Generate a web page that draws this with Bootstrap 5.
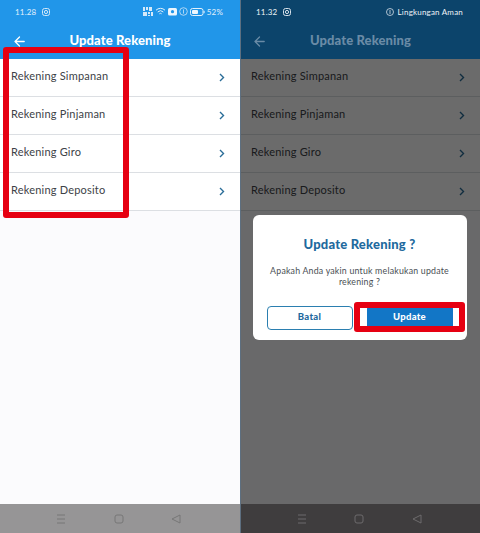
<!DOCTYPE html>
<html lang="id">
<head>
    <meta charset="UTF-8">
    <meta name="viewport" content="width=device-width, initial-scale=1.0">
    <title>Update Rekening</title>
    <link href="https://cdn.jsdelivr.net/npm/bootstrap@5.3.3/dist/css/bootstrap.min.css" rel="stylesheet">
    <style>
        html, body { height: 533px; overflow: hidden; }
        body { margin: 0; background: #5d6f80; font-family: "Lato", "Liberation Sans", sans-serif; }
        .screens { width: 480px; height: 533px; gap: 1px; }
        .phone { width: 240px; height: 533px; background: #fff; }
        .phone-right { width: 239px; }
        .top-blue { height: 59px; background: #2196e9; color: #fff; }
        .phone-right .top-blue { background: #1da2ff; }
        .status-line { height: 23px; padding: 0 17px 0 15px; font-size: 8px; letter-spacing: .2px; color: #e3f1fc; }
        .status-left { gap: 6px; }
        .status-icons { gap: 2px; }
        .title-line { height: 36px; padding-left: 14px; }
        .phone-right .title-line { padding-left: 13px; position: relative; z-index: 2; }
        .title-text { left: 0; right: 0; text-align: center; font-size: 13px; font-weight: 900; letter-spacing: .1px; color: #fff; }
        .phone-right .title-text { color: #6a8ba6; }
        .menu-row { height: 38px; padding: 0 15px 0 11px; border-bottom: 1px solid #dcdfe3; font-size: 11px; letter-spacing: .2px; color: #3d4247; }
        .phone-right .menu-row { padding: 0 15px 0 10px; }
        .row-label { margin-bottom: 3px; }
        .fill-area { background: #fbfbfd; }
        .bottom-nav { height: 29px; background: #969596; padding: 0 3px 0 0; gap: 47.5px; }
        .phone-right .bottom-nav { background: #3f3d3e; position: relative; z-index: 2; }
        .dim-layer { inset: 0; background: rgba(0, 0, 0, .58); padding-top: 21px; padding-right: 2px; }
        .status-over { top: 0; left: 0; right: 0; color: #eef3f7; z-index: 2; }
        .dialog-box { width: 214px; height: 125px; background: #fff; border-radius: 6px; padding: 21px 14px 0; }
        .dialog-title { font-size: 13px; font-weight: 900; letter-spacing: .2px; color: #1f6a9e; margin: 0 0 13px; line-height: 16px; }
        .dialog-msg { font-size: 8.8px; letter-spacing: .2px; line-height: 11px; color: #4a4f55; margin: 0 0 19px; }
        .btn-batal, .btn-update { height: 24px; width: 86px; padding: 0; font-size: 9.5px; font-weight: 900; letter-spacing: .3px; border-radius: 3px; }
        .btn-batal { background: #fff; color: #1f6a9e; border: 1px solid #2b7fb0; border-radius: 4px; }
        .btn-update { background: #1276c6; color: #fff; border: 0; }
        .dialog-actions { gap: 14px; }
        .red-mark { position: absolute; border: 6px solid #e60012; border-radius: 3px; z-index: 5; }
        .mark-list { left: 3px; top: 47px; width: 126px; height: 171px; }
        .mark-btn { left: 354px; top: 302px; width: 111px; height: 30px; }
    </style>
</head>
<body>
<div class="screens d-flex position-relative">

    <!-- kiri: daftar rekening -->
    <div class="phone d-flex flex-column">
        <div class="top-blue">
            <div class="status-line d-flex align-items-center justify-content-between">
                <div class="status-left d-flex align-items-center">
                    <span>11.28</span>
                    <svg width="8" height="8" viewBox="0 0 8 8" fill="none" stroke="#cfe6f8" stroke-width="1"><rect x=".5" y=".5" width="7" height="7" rx="2"/><circle cx="4" cy="4" r="1.6"/></svg>
                </div>
                <div class="status-icons d-flex align-items-center">
                    <svg width="10" height="9" viewBox="0 0 10 9" fill="#d5e9f9"><rect width="2" height="4"/><rect x="3" width="2" height="3"/><rect x="6" width="3" height="4"/><rect y="5" width="4" height="4"/><rect x="5" y="5" width="2" height="2"/><rect x="8" y="5" width="2" height="4"/><rect x="5" y="8" width="2" height="1"/></svg>
                    <svg width="11" height="9" viewBox="0 0 11 9" fill="none" stroke="#e3f1fc" stroke-width="1"><path d="M1 3.2a6.4 6.4 0 0 1 9 0M2.7 5a4 4 0 0 1 5.6 0M4.4 6.8a1.6 1.6 0 0 1 2.2 0"/></svg>
                    <svg width="9" height="8" viewBox="0 0 9 8" fill="#eef6fd"><rect width="9" height="7.5" rx="1.5"/><circle cx="4.5" cy="3.7" r="1.6" fill="#2196e9"/></svg>
                    <svg width="9" height="9" viewBox="0 0 9 9" fill="none" stroke="#cfe6f8" stroke-width=".8"><circle cx="4.5" cy="4.5" r="3.8"/><path d="M4.5 2.4v4.2"/></svg>
                    <svg width="15" height="8" viewBox="0 0 15 8"><rect x=".5" y=".5" width="12.5" height="7" rx="2" fill="none" stroke="#e3f1fc"/><rect x="2" y="2" width="6" height="4" rx="1" fill="#eef6fd"/><rect x="13.6" y="2.8" width="1" height="2.4" fill="#e3f1fc"/></svg>
                    <span>52%</span>
                </div>
            </div>
            <div class="title-line position-relative d-flex align-items-center">
                <div class="title-text position-absolute">Update Rekening</div>
                <svg width="11" height="11" viewBox="0 0 11 11" fill="none" stroke="#fff" stroke-width="1.3" stroke-linecap="round" stroke-linejoin="round"><path d="M10.2 5.5H1M5.5 1 1 5.5 5.5 10"/></svg>
            </div>
        </div>
        <div class="menu-row d-flex align-items-center justify-content-between"><span class="row-label">Rekening Simpanan</span>
            <svg width="6" height="9" viewBox="0 0 6 9" fill="none" stroke="#2a6d98" stroke-width="1.4"><path d="M1 1l3.5 3.5L1 8"/></svg></div>
        <div class="menu-row d-flex align-items-center justify-content-between"><span class="row-label">Rekening Pinjaman</span>
            <svg width="6" height="9" viewBox="0 0 6 9" fill="none" stroke="#2a6d98" stroke-width="1.4"><path d="M1 1l3.5 3.5L1 8"/></svg></div>
        <div class="menu-row d-flex align-items-center justify-content-between"><span class="row-label">Rekening Giro</span>
            <svg width="6" height="9" viewBox="0 0 6 9" fill="none" stroke="#2a6d98" stroke-width="1.4"><path d="M1 1l3.5 3.5L1 8"/></svg></div>
        <div class="menu-row d-flex align-items-center justify-content-between"><span class="row-label">Rekening Deposito</span>
            <svg width="6" height="9" viewBox="0 0 6 9" fill="none" stroke="#2a6d98" stroke-width="1.4"><path d="M1 1l3.5 3.5L1 8"/></svg></div>
        <div class="fill-area flex-grow-1"></div>
        <div class="bottom-nav d-flex align-items-center justify-content-center">
            <svg width="10" height="10" viewBox="0 0 10 10" fill="none" stroke="#777" stroke-width="1"><path d="M1 1h8M1 5h8M1 9h8"/></svg>
            <svg width="10" height="10" viewBox="0 0 10 10" fill="none" stroke="#777" stroke-width="1"><rect x="1" y="1" width="8" height="8" rx="2"/></svg>
            <svg width="10" height="10" viewBox="0 0 10 10" fill="none" stroke="#777" stroke-width="1"><path d="M9 1v8L1 5z" stroke-linejoin="round"/></svg>
        </div>
    </div>

    <!-- kanan: dialog konfirmasi -->
    <div class="phone phone-right d-flex flex-column position-relative">
        <div class="top-blue">
            <div class="status-line"></div>
            <div class="title-line d-flex align-items-center">
                <div class="title-text position-absolute">Update Rekening</div>
                <svg width="11" height="11" viewBox="0 0 11 11" fill="none" stroke="#6a8ba6" stroke-width="1.3" stroke-linecap="round" stroke-linejoin="round"><path d="M10.2 5.5H1M5.5 1 1 5.5 5.5 10"/></svg>
            </div>
        </div>
        <div class="menu-row d-flex align-items-center justify-content-between"><span class="row-label">Rekening Simpanan</span>
            <svg width="6" height="9" viewBox="0 0 6 9" fill="none" stroke="#2a6d98" stroke-width="1.4"><path d="M1 1l3.5 3.5L1 8"/></svg></div>
        <div class="menu-row d-flex align-items-center justify-content-between"><span class="row-label">Rekening Pinjaman</span>
            <svg width="6" height="9" viewBox="0 0 6 9" fill="none" stroke="#2a6d98" stroke-width="1.4"><path d="M1 1l3.5 3.5L1 8"/></svg></div>
        <div class="menu-row d-flex align-items-center justify-content-between"><span class="row-label">Rekening Giro</span>
            <svg width="6" height="9" viewBox="0 0 6 9" fill="none" stroke="#2a6d98" stroke-width="1.4"><path d="M1 1l3.5 3.5L1 8"/></svg></div>
        <div class="menu-row d-flex align-items-center justify-content-between"><span class="row-label">Rekening Deposito</span>
            <svg width="6" height="9" viewBox="0 0 6 9" fill="none" stroke="#2a6d98" stroke-width="1.4"><path d="M1 1l3.5 3.5L1 8"/></svg></div>
        <div class="fill-area flex-grow-1"></div>
        <div class="bottom-nav d-flex align-items-center justify-content-center">
            <svg width="10" height="10" viewBox="0 0 10 10" fill="none" stroke="#6d6b6c" stroke-width="1"><path d="M1 1h8M1 5h8M1 9h8"/></svg>
            <svg width="10" height="10" viewBox="0 0 10 10" fill="none" stroke="#6d6b6c" stroke-width="1"><rect x="1" y="1" width="8" height="8" rx="2"/></svg>
            <svg width="10" height="10" viewBox="0 0 10 10" fill="none" stroke="#6d6b6c" stroke-width="1"><path d="M9 1v8L1 5z" stroke-linejoin="round"/></svg>
        </div>
        <div class="dim-layer position-absolute d-flex align-items-center justify-content-center">
            <div class="dialog-box text-center">
                <h6 class="dialog-title">Update Rekening ?</h6>
                <p class="dialog-msg">Apakah Anda yakin untuk melakukan update rekening ?</p>
                <div class="dialog-actions d-flex justify-content-center">
                    <button type="button" class="btn btn-batal">Batal</button>
                    <button type="button" class="btn btn-update">Update</button>
                </div>
            </div>
        </div>
        <div class="status-line status-over position-absolute d-flex align-items-center justify-content-between">
            <div class="status-left d-flex align-items-center">
                <span>11.32</span>
                <svg width="8" height="8" viewBox="0 0 8 8" fill="none" stroke="#d5e0e9" stroke-width="1"><rect x=".5" y=".5" width="7" height="7" rx="2"/><circle cx="4" cy="4" r="1.6"/></svg>
            </div>
            <div class="d-flex align-items-center gap-1">
                <svg width="8" height="8" viewBox="0 0 8 8" fill="none" stroke="#d5e0e9" stroke-width=".8"><circle cx="4" cy="4" r="3.5"/><path d="M4 2v4"/></svg>
                <span>Lingkungan Aman</span>
            </div>
        </div>
    </div>

    <div class="red-mark mark-list"></div>
    <div class="red-mark mark-btn"></div>
</div>
<script src="https://cdn.jsdelivr.net/npm/bootstrap@5.3.3/dist/js/bootstrap.bundle.min.js"></script>
</body>
</html>
